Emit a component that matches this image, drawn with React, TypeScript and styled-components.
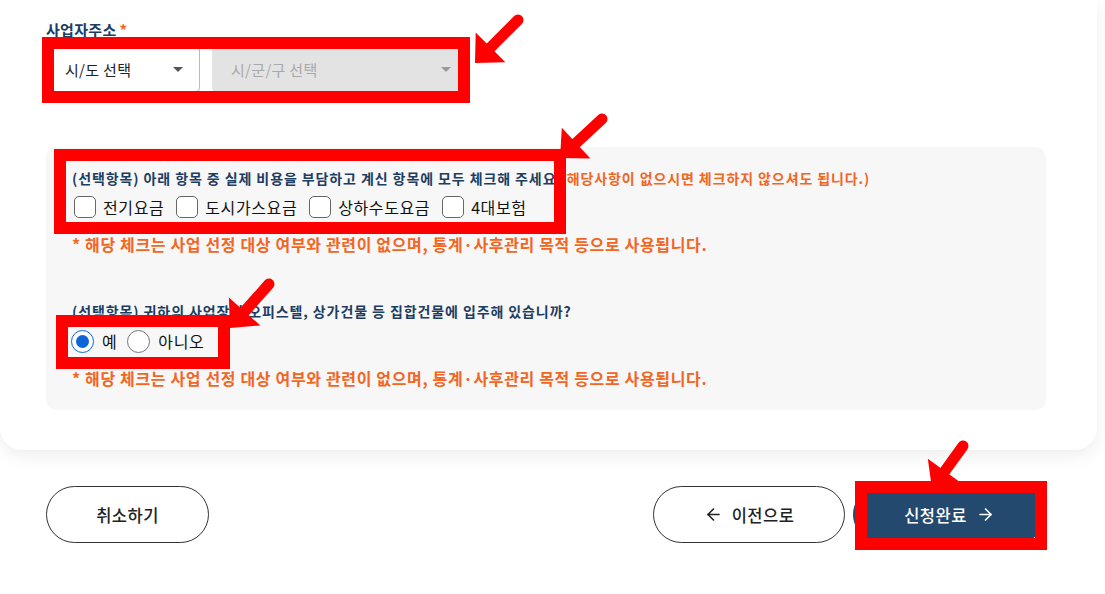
import { createGlobalStyle } from "styled-components";
import styled from "styled-components";
import { ArrowLeft, ArrowRight } from "lucide-react";

const GlobalStyle = createGlobalStyle`
    html, body {
        margin: 0;
        padding: 0;
        background: #ffffff;
    }
    body {
        font-family: "Noto Sans CJK KR", "Noto Sans", sans-serif;
        color: #222;
    }
    * { box-sizing: border-box; }
`;

const Page = styled.div`
    position: relative;
    width: 1105px;
    height: 594px;
    overflow: hidden;
    background: #fff;
`;

const Card = styled.section`
    width: 1097px;
    background: #fff;
    border-radius: 0 0 22px 22px;
    box-shadow: 0 6px 18px rgba(0, 0, 0, 0.07);
    padding: 20px 51px 40px 46px;
`;

const FieldLabel = styled.div`
    font-size: 15px;
    font-weight: 700;
    line-height: 20px;
    color: #1d3d63;
    margin-bottom: 6px;
    letter-spacing: 0.3px;

    span {
        color: #f26522;
        margin-left: 3px;
    }
`;

const SelectRow = styled.div`
    display: flex;
    gap: 12px;
`;

const Select = styled.div<{ $disabled?: boolean; $width: number }>`
    width: ${(p) => p.$width}px;
    height: 46px;
    display: flex;
    align-items: center;
    justify-content: space-between;
    padding: 0 16px 0 18px;
    border: 1px solid ${(p) => (p.$disabled ? "#e2e2e2" : "#bbb")};
    border-radius: 4px;
    background: ${(p) => (p.$disabled ? "#e3e3e3" : "#fff")};
    color: ${(p) => (p.$disabled ? "#a9a9a9" : "#222")};
    font-size: 15px;
    letter-spacing: 0.3px;
`;

const Caret = styled.i<{ $disabled?: boolean }>`
    width: 0;
    height: 0;
    border-left: 5px solid transparent;
    border-right: 5px solid transparent;
    border-top: 5px solid ${(p) => (p.$disabled ? "#9a9a9a" : "#555")};
`;

const Panel = styled.div`
    margin-top: 55px;
    background: #f7f7f7;
    border-radius: 10px;
    padding: 22px 26px 21px;
`;

const Section = styled.div<{ $gap?: number }>`
    margin-top: ${(p) => p.$gap || 0}px;
`;

const Question = styled.p`
    margin: 0;
    font-size: 14px;
    font-weight: 700;
    line-height: 18px;
    color: #1d3d63;
    letter-spacing: 0.9px;
    white-space: nowrap;

    em {
        font-style: normal;
        color: #f26522;
    }
`;

const OptionRow = styled.div<{ $top: number; $indent: number }>`
    display: flex;
    align-items: center;
    height: 22px;
    margin-top: ${(p) => p.$top}px;
    margin-left: ${(p) => p.$indent}px;
`;

const Option = styled.label`
    display: flex;
    align-items: center;
    gap: 7px;
    margin-right: 12px;
    font-size: 16px;
    letter-spacing: 0.6px;
    color: #111;
    line-height: 22px;
`;

const CheckBox = styled.span`
    width: 22px;
    height: 22px;
    border: 1px solid #666;
    border-radius: 5px;
    background: #fff;
`;

const Radio = styled.span<{ $checked?: boolean }>`
    width: 23px;
    height: 23px;
    border-radius: 50%;
    background: #fff;
    border: 1.5px solid ${(p) => (p.$checked ? "#0b66d9" : "#777")};
    display: flex;
    align-items: center;
    justify-content: center;

    &::after {
        content: "";
        width: 13px;
        height: 13px;
        border-radius: 50%;
        background: ${(p) => (p.$checked ? "#0b66d9" : "transparent")};
    }
`;

const RadioOption = styled(Option)`
    gap: 8px;
    margin-right: 10px;
`;

const Notice = styled.p`
    margin: 15px 0 0;
    font-size: 16px;
    font-weight: 700;
    line-height: 22px;
    color: #f26522;
    letter-spacing: 0.65px;
    white-space: nowrap;
`;

const ButtonBar = styled.div`
    display: flex;
    align-items: center;
    margin-top: 36px;
    padding: 0 59px 0 46px;
`;

const Spacer = styled.div`
    flex: 1;
`;

const PillButton = styled.button<{ $width: number; $primary?: boolean }>`
    width: ${(p) => p.$width}px;
    height: 57px;
    border-radius: 29px;
    border: 1px solid ${(p) => (p.$primary ? "#23496f" : "#333")};
    background: ${(p) => (p.$primary ? "#23496f" : "#fff")};
    color: ${(p) => (p.$primary ? "#fff" : "#222")};
    font-family: "Noto Sans CJK KR", "Noto Sans", sans-serif;
    font-size: 16.5px;
    font-weight: 500;
    letter-spacing: 0.5px;
    display: flex;
    align-items: center;
    justify-content: center;
    gap: 9px;
    padding: 0;
    margin-left: ${(p) => (p.$primary ? "8px" : "0")};
`;

// 주석 표시용 빨간 박스 (스크린샷 위 오버레이)
const MarkBox = styled.div<{ $x: number; $y: number; $w: number; $h: number }>`
    position: absolute;
    left: ${(p) => p.$x}px;
    top: ${(p) => p.$y}px;
    width: ${(p) => p.$w}px;
    height: ${(p) => p.$h}px;
    border: 12px solid #ff0000;
    pointer-events: none;
`;

const Overlay = styled.svg`
    position: absolute;
    left: 0;
    top: 0;
    pointer-events: none;
`;

type Pt = [number, number];

const arrows: { tip: Pt; tail: Pt }[] = [
    { tip: [475, 63], tail: [518, 20] },
    { tip: [560, 158], tail: [602, 119] },
    { tip: [230, 328], tail: [269, 284] },
    { tip: [932, 489], tail: [963, 446] },
];

function Arrow({ tip, tail }: { tip: Pt; tail: Pt }) {
    const dx = tail[0] - tip[0];
    const dy = tail[1] - tip[1];
    const len = Math.hypot(dx, dy);
    const ux = dx / len;
    const uy = dy / len;
    const h = 22;
    const w = 21;
    const bx = tip[0] + ux * h;
    const by = tip[1] + uy * h;
    const p1: Pt = [bx - uy * w, by + ux * w];
    const p2: Pt = [bx + uy * w, by - ux * w];
    return (
        <g fill="#ff0000" stroke="#ff0000">
            <line
                x1={tip[0] + ux * 14}
                y1={tip[1] + uy * 14}
                x2={tail[0]}
                y2={tail[1]}
                strokeWidth={11}
                strokeLinecap="round"
            />
            <polygon points={`${tip[0]},${tip[1]} ${p1[0]},${p1[1]} ${p2[0]},${p2[1]}`} strokeWidth={0} />
        </g>
    );
}

export default function App() {
    return (
        <Page>
            <GlobalStyle />
            <Card>
                <FieldLabel>
                    사업자주소<span>*</span>
                </FieldLabel>
                <SelectRow>
                    <Select $width={154}>
                        시/도 선택
                        <Caret />
                    </Select>
                    <Select $width={256} $disabled>
                        시/군/구 선택
                        <Caret $disabled />
                    </Select>
                </SelectRow>

                <Panel>
                    <Section>
                        <Question>
                            (선택항목) 아래 항목 중 실제 비용을 부담하고 계신 항목에 모두 체크해 주세요{" "}
                            <em>(해당사항이 없으시면 체크하지 않으셔도 됩니다.)</em>
                        </Question>
                        <OptionRow $top={9} $indent={2}>
                            {["전기요금", "도시가스요금", "상하수도요금", "4대보험"].map((item) => (
                                <Option key={item}>
                                    <CheckBox />
                                    {item}
                                </Option>
                            ))}
                        </OptionRow>
                        <Notice>* 해당 체크는 사업 선정 대상 여부와 관련이 없으며, 통계·사후관리 목적 등으로 사용됩니다.</Notice>
                    </Section>

                    <Section $gap={47}>
                        <Question>(선택항목) 귀하의 사업장이 오피스텔, 상가건물 등 집합건물에 입주해 있습니까?</Question>
                        <OptionRow $top={10} $indent={-1}>
                            <RadioOption>
                                <Radio $checked />
                                예
                            </RadioOption>
                            <RadioOption>
                                <Radio />
                                아니오
                            </RadioOption>
                        </OptionRow>
                        <Notice>* 해당 체크는 사업 선정 대상 여부와 관련이 없으며, 통계·사후관리 목적 등으로 사용됩니다.</Notice>
                    </Section>
                </Panel>
            </Card>

            <ButtonBar>
                <PillButton $width={163}>취소하기</PillButton>
                <Spacer />
                <PillButton $width={192}>
                    <ArrowLeft size={19} strokeWidth={2} />
                    이전으로
                </PillButton>
                <PillButton $width={193} $primary>
                    신청완료
                    <ArrowRight size={19} strokeWidth={2} />
                </PillButton>
            </ButtonBar>

            <MarkBox $x={42} $y={37} $w={428} $h={66} />
            <MarkBox $x={54} $y={149} $w={512} $h={85} />
            <MarkBox $x={56} $y={315} $w={174} $h={54} />
            <MarkBox $x={855} $y={481} $w={192} $h={69} />

            <Overlay width={1105} height={594}>
                {arrows.map((a, i) => (
                    <Arrow key={i} tip={a.tip} tail={a.tail} />
                ))}
            </Overlay>
        </Page>
    );
}
